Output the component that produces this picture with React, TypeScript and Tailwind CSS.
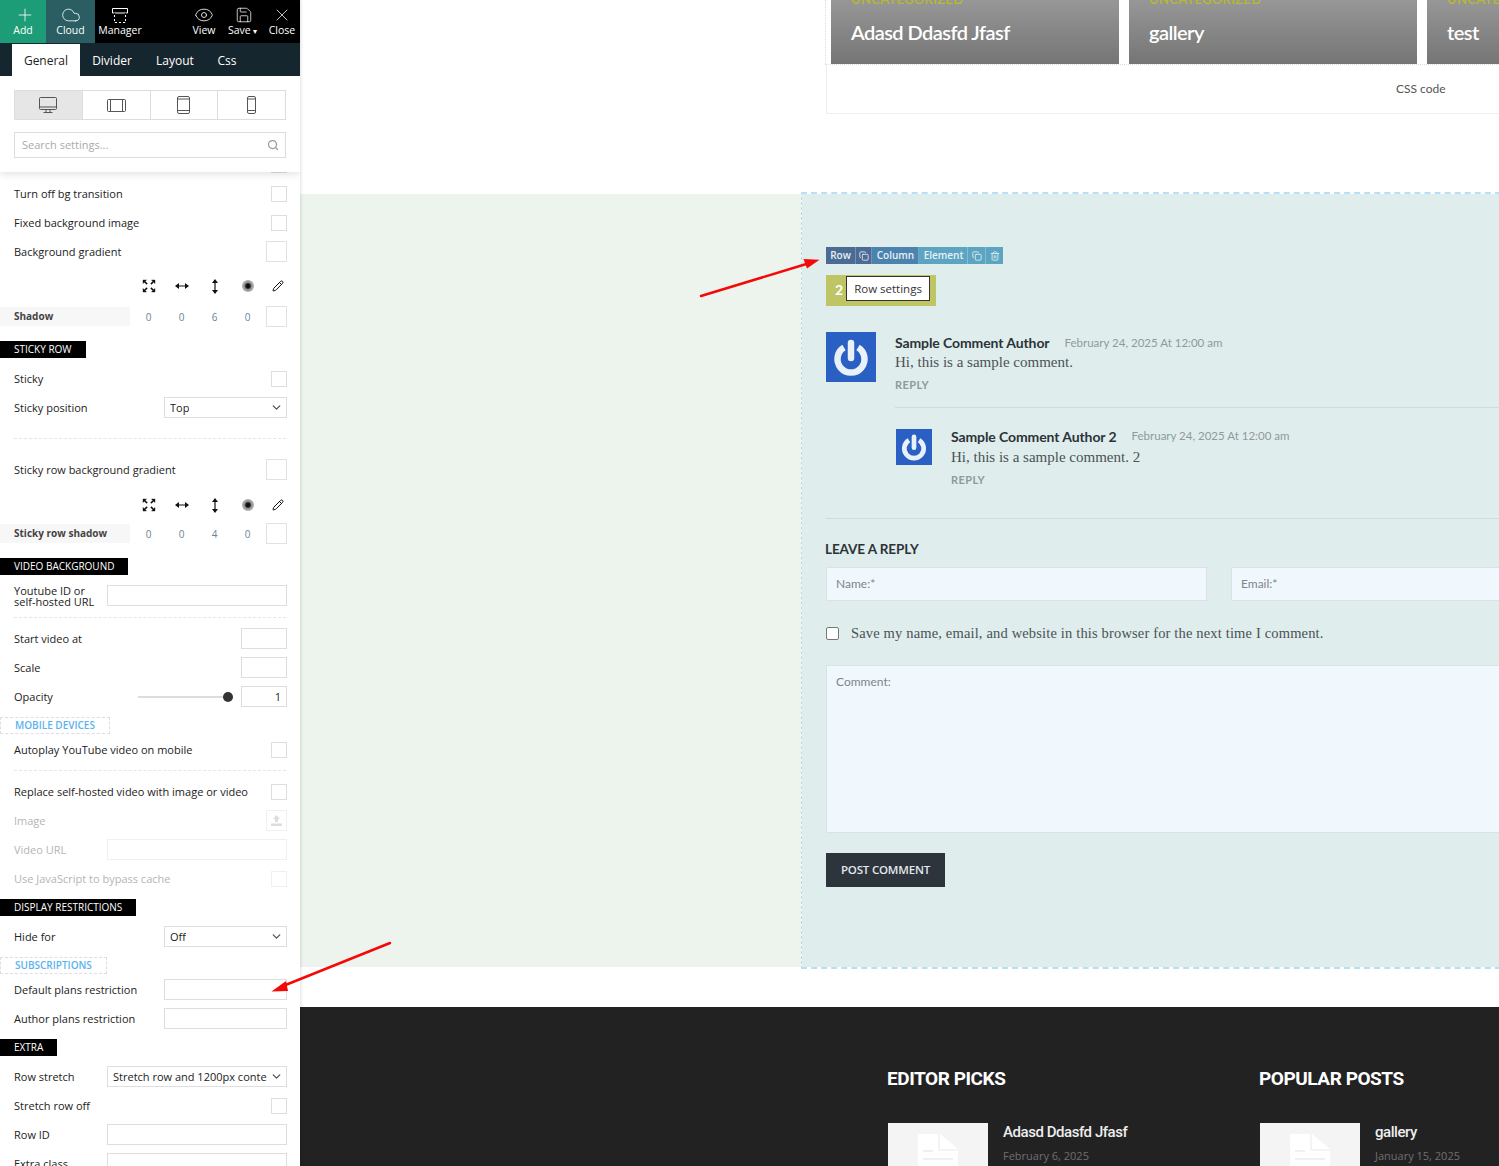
import React from "react";
import { ChevronDown, Cloud, Copy, Eye, Pencil, Plus, Save, Search, Trash2, X } from "lucide-react";

const sans = "font-['Open_Sans',sans-serif]";

function Row({ label, children, dim }: { label: React.ReactNode; children?: React.ReactNode; dim?: boolean }) {
  return (
    <div className="flex h-[29px] items-center justify-between pl-[14px] pr-[13px]">
      <span className={dim ? "text-[#b5b5b5]" : "text-[#222]"}>{label}</span>
      <div className="-mt-[2px] flex">{children}</div>
    </div>
  );
}

const Check = ({ dim }: { dim?: boolean }) => (
  <div className={`h-[16px] w-[16px] border ${dim ? "border-[#f0f0f0]" : "border-[#dedede]"}`} />
);
const Swatch = () => <div className="h-[21px] w-[21px] border border-[#e2e2e2]" />;
const Field = ({ w, dim, children }: { w: string; dim?: boolean; children?: React.ReactNode }) => (
  <div className={`flex h-[21px] items-center justify-end border pr-[5px] pt-[2px] ${w} ${dim ? "border-[#f0f0f0]" : "border-[#dedede]"}`}>{children}</div>
);
const Select = ({ w, value }: { w: string; value: string }) => (
  <div className={`flex h-[21px] items-center justify-between overflow-hidden border border-[#dedede] pl-[5px] pr-[3px] text-[#222] ${w}`}>
    <span className="overflow-hidden whitespace-nowrap pt-[2px]">{value}</span>
    <ChevronDown size={13} strokeWidth={2.5} className="ml-[2px] shrink-0 text-[#555]" />
  </div>
);
const Heading = ({ w, mt, children }: { w: string; mt: string; children: React.ReactNode }) => (
  <div className={`flex h-[17px] items-center bg-black pl-[14px] text-[10px] text-white ${w} ${mt}`}>{children}</div>
);
const SubHeading = ({ w, mt, children }: { w: string; mt: string; children: React.ReactNode }) => (
  <div className={`flex h-[17px] items-center border border-dashed border-[#dedede] pl-[14px] text-[10px] font-semibold text-[#5bb2ef] ${w} ${mt}`}>{children}</div>
);
const Dash = ({ mt }: { mt: string }) => <div className={`mx-[14px] h-px border-t border-dashed border-[#e6e6e6] ${mt}`} />;

function ExpandIcon() {
  return (
    <svg width="14" height="14" viewBox="0 0 14 14" fill="#111" stroke="#111" strokeWidth="0.4">
      <path d="M1 1h3.500L3.200 2.300 5.400 4.500 4.500 5.400 2.300 3.200 1 4.500z" />
      <path d="M13 1v3.500L11.700 3.200 9.500 5.400 8.600 4.500 10.800 2.300 9.500 1z" />
      <path d="M1 13V9.500L2.300 10.800 4.500 8.600 5.400 9.500 3.200 11.700 4.500 13z" />
      <path d="M13 13H9.500L10.800 11.700 8.600 9.500 9.500 8.600 11.700 10.800 13 9.500z" />
    </svg>
  );
}

function ShadowIcons() {
  const cell = "flex w-[33px] justify-center";
  return (
    <div className="flex h-[38px] items-center pl-[132px] text-[#111]">
      <div className={cell}><ExpandIcon /></div>
      <div className={cell}>
        <svg width="14" height="8" viewBox="0 0 14 8" fill="#111"><path d="M0 4l4-3v2.400h6V1l4 3-4 3V4.600H4V7z" /></svg>
      </div>
      <div className={cell}>
        <svg width="8" height="15" viewBox="0 0 8 15" fill="#111"><path d="M4 0l3 4H4.600v7H7l-3 4-3-4h2.400V4H1z" /></svg>
      </div>
      <div className={cell}>
        <div className="h-[12px] w-[12px] rounded-full bg-[radial-gradient(circle,#111_0%,#111_22%,#999_45%,#ccc_100%)]" />
      </div>
      <div className="ml-[4px] flex w-[20px] justify-center"><Pencil size={12} strokeWidth={2} /></div>
    </div>
  );
}

function ShadowRow({ label, v }: { label: string; v: string }) {
  return (
    <div className="flex h-[19px] items-center">
      <div className="flex h-full w-[130px] items-center bg-[#f7f7f7] pl-[14px] text-[10px] font-bold text-[#444]">{label}</div>
      <div className="ml-[2px] flex pt-[1px] text-[10px] text-[#6d8290]">
        {["0", "0", v, "0"].map((n, i) => <div key={i} className="w-[33px] text-center">{n}</div>)}
      </div>
      <div className="ml-[2px]"><Swatch /></div>
    </div>
  );
}

function Panel() {
  return (
    <aside className={`relative z-10 flex h-full w-[300px] shrink-0 flex-col overflow-hidden bg-white text-[11px] shadow-[1px_0_3px_rgba(0,0,0,0.12)] ${sans}`}>
      <div className="relative z-10 h-[172px] shrink-0 bg-white shadow-[0_2px_8px_rgba(0,0,0,0.12)]">
        <div className="flex h-[43px] bg-black text-[10.5px] text-white">
          <div className="flex w-[46px] flex-col items-center bg-[#1c9d77] pl-[2px] pt-[5px]"><Plus size={20} strokeWidth={1} className="ml-[2px]" /><span className="-mt-[2px] pr-[2px] leading-[14px]">Add</span></div>
          <div className="flex w-[49px] flex-col items-center bg-[#2a5e62] pt-[5px]"><Cloud size={20} strokeWidth={1} /><span className="-mt-[2px] leading-[14px]">Cloud</span></div>
          <div className="flex w-[50px] flex-col items-center pt-[8px]">
            <svg width="16" height="15" viewBox="0 0 16 15" fill="none" stroke="white" strokeWidth="1">
              <path d="M.5 5V.5h15V5zM2.500 5v9.500h11V5" />
              <path d="M2.500 5v9.500h11V5" stroke="black" strokeDasharray="2 2" />
            </svg>
            <span className="leading-[14px]">Manager</span>
          </div>
          <div className="ml-auto flex">
            <div className="mr-[12px] flex w-[24px] flex-col items-center pt-[5px]"><Eye size={20} strokeWidth={1} /><span className="-mt-[2px] leading-[14px]">View</span></div>
            <div className="mr-[6px] flex w-[30px] flex-col items-start pt-[6px]"><Save size={18} strokeWidth={1} className="ml-[7px]" /><span className="-mt-[1px] whitespace-nowrap leading-[14px]">Save <span className="text-[8px]">▾</span></span></div>
            <div className="flex w-[36px] flex-col items-center pt-[5px]"><X size={20} strokeWidth={0.9} /><span className="-mt-[2px] leading-[14px]">Close</span></div>
          </div>
        </div>
        <div className="flex h-[33px] items-end bg-[#16262e] pl-[12px] text-[12px] text-white">
          <div className="flex h-[32px] w-[68px] items-center justify-center bg-white pt-[2px] text-[#222]">General</div>
          <div className="flex h-[32px] w-[64px] items-center justify-center pt-[2px]">Divider</div>
          <div className="flex h-[32px] w-[62px] items-center justify-center pt-[2px]">Layout</div>
          <div className="flex h-[32px] w-[42px] items-center justify-center pt-[2px]">Css</div>
        </div>
        <div className="mx-[14px] mt-[14px] flex h-[30px] w-[272px] border border-[#dddddd] text-[#555]">
          <div className="flex flex-1 items-center justify-center bg-[#e6e6e6]">
            <svg width="18" height="18" viewBox="0 0 18 18" fill="none" stroke="#555" strokeWidth="1"><rect x=".5" y="1.500" width="17" height="12" rx="1" /><path d="M.5 11h17M7 13.500V16M11 13.500V16M4.500 16.500h9" /></svg>
          </div>
          <div className="flex flex-1 items-center justify-center border-l border-[#dddddd]">
            <svg width="19" height="13" viewBox="0 0 19 13" fill="none" stroke="#555" strokeWidth="1"><rect x=".5" y=".5" width="18" height="12" rx="1" /><path d="M3.500.5v12M15.500.5v12" /></svg>
          </div>
          <div className="flex flex-1 items-center justify-center border-l border-[#dddddd]">
            <svg width="13" height="18" viewBox="0 0 13 18" fill="none" stroke="#555" strokeWidth="1"><rect x=".5" y=".5" width="12" height="17" rx="1.500" /><path d="M.5 3h12M.5 14.500h12" /></svg>
          </div>
          <div className="flex flex-1 items-center justify-center border-l border-[#dddddd]">
            <svg width="9" height="18" viewBox="0 0 9 18" fill="none" stroke="#555" strokeWidth="1"><rect x=".5" y=".5" width="8" height="17" rx="1.500" /><path d="M.5 3h8M.5 14.500h8" /></svg>
          </div>
        </div>
        <div className="mx-[14px] mt-[12px] flex h-[26px] w-[272px] items-center justify-between border border-[#dddddd] pl-[7px] pr-[6px] text-[#aaa]">
          <span>Search settings...</span>
          <Search size={12} strokeWidth={2.5} className="text-[#999]" />
        </div>
      </div>

      <div className="flex-1">
        <div className="ml-[271px] h-px w-[16px] bg-[#dedede]" />
        <div className="mt-[7px]" />
        <Row label="Turn off bg transition"><Check /></Row>
        <Row label="Fixed background image"><Check /></Row>
        <Row label="Background gradient"><Swatch /></Row>
        <ShadowIcons />
        <div className="mt-[2px]"><ShadowRow label="Shadow" v="6" /></div>
        <Heading w="w-[86px]" mt="mt-[15px]">STICKY ROW</Heading>
        <div className="mt-[7px]" />
        <Row label="Sticky"><Check /></Row>
        <Row label="Sticky position"><Select w="w-[123px]" value="Top" /></Row>
        <Dash mt="mt-[15px]" />
        <div className="mt-[17px]" />
        <Row label="Sticky row background gradient"><Swatch /></Row>
        <div className="mt-[1px]"><ShadowIcons /></div>
        <ShadowRow label="Sticky row shadow" v="4" />
        <Heading w="w-[128px]" mt="mt-[15px]">VIDEO BACKGROUND</Heading>
        <div className="mt-[10px] flex h-[21px] items-center justify-between pl-[14px] pr-[13px]">
          <span className="text-[11px] leading-[11px] text-[#222]">Youtube ID or<br />self-hosted URL</span>
          <Field w="w-[180px]" />
        </div>
        <Dash mt="mt-[11px]" />
        <div className="mt-[7px]" />
        <Row label="Start video at"><Field w="w-[46px]" /></Row>
        <Row label="Scale"><Field w="w-[46px]" /></Row>
        <Row label="Opacity">
          <div className="flex items-center">
            <div className="relative mr-[8px] h-[2px] w-[95px] bg-[#dddddd]">
              <div className="absolute -top-[4px] right-0 h-[10px] w-[10px] rounded-full bg-[#333]" />
            </div>
            <Field w="w-[46px]"><span className="text-[#222]">1</span></Field>
          </div>
        </Row>
        <SubHeading w="w-[110px]" mt="mt-[5px]">MOBILE DEVICES</SubHeading>
        <div className="mt-[2px]" />
        <Row label="Autoplay YouTube video on mobile"><Check /></Row>
        <Dash mt="mt-[5px]" />
        <div className="mt-[7px]" />
        <Row label="Replace self-hosted video with image or video"><Check /></Row>
        <Row label="Image" dim>
          <div className="flex h-[21px] w-[21px] items-center justify-center border border-[#f0f0f0]">
            <svg width="11" height="11" viewBox="0 0 11 11" fill="#dddddd"><path d="M5.500 0L9 4H7v3H4V4H2zM0 8.500h11V11H0z" /></svg>
          </div>
        </Row>
        <Row label="Video URL" dim><Field w="w-[180px]" dim /></Row>
        <Row label="Use JavaScript to bypass cache" dim><Check dim /></Row>
        <Heading w="w-[136px]" mt="mt-[5px]">DISPLAY RESTRICTIONS</Heading>
        <div className="mt-[7px]" />
        <Row label="Hide for"><Select w="w-[123px]" value="Off" /></Row>
        <SubHeading w="w-[107px]" mt="mt-[5px]">SUBSCRIPTIONS</SubHeading>
        <div className="mt-[2px]" />
        <Row label="Default plans restriction"><Field w="w-[123px]" /></Row>
        <Row label="Author plans restriction"><Field w="w-[123px]" /></Row>
        <Heading w="w-[57px]" mt="mt-[5px]">EXTRA</Heading>
        <div className="mt-[7px]" />
        <Row label="Row stretch"><Select w="w-[180px]" value="Stretch row and 1200px conte" /></Row>
        <Row label="Stretch row off"><Check /></Row>
        <Row label="Row ID"><Field w="w-[180px]" /></Row>
        <Row label="Extra class"><Field w="w-[180px]" /></Row>
      </div>
    </aside>
  );
}

function PostCard({ title, w }: { title: string; w: string }) {
  return (
    <div className={`flex h-[64px] shrink-0 flex-col justify-end overflow-hidden bg-gradient-to-b from-[#979797] to-[#757575] pb-[20px] pl-[20px] ${w}`}>
      <div className="text-[13px] font-semibold leading-[16px] tracking-[0.3px] text-[#b6ba2e]">UNCATEGORIZED</div>
      <div className="mt-[13px] text-[20px] font-semibold leading-[24px] tracking-[-0.55px] text-white">{title}</div>
    </div>
  );
}

function PowerAvatar({ size }: { size: string }) {
  return (
    <div className={`shrink-0 bg-[#2a5fc4] ${size}`}>
      <svg viewBox="0 0 50 50" className="h-full w-full" fill="none" stroke="#e8f1f8" strokeWidth="6.500">
        <path d="M18 15.500a13.500 13.500 0 1 0 14 0" />
        <path d="M25 11v15" strokeLinecap="round" />
      </svg>
    </div>
  );
}

function Comment({ author, date, text, avatar, small }: { author: string; date: string; text: string; avatar: string; small?: boolean }) {
  return (
    <div className="flex gap-[19px]">
      <PowerAvatar size={avatar} />
      <div>
        <div className={`flex items-center text-[14px] font-bold tracking-[-0.1px] text-[#2c3338] ${small ? "h-[14px]" : "h-[21px]"}`}>
          <span>{author}</span>
          <span className="ml-[15px] text-[11.5px] font-normal tracking-normal text-[#8f9a9c]">{date}</span>
        </div>
        <div className={`flex items-center font-['Liberation_Serif',serif] text-[15px] text-[#4a5256] ${small ? "mt-[6px] h-[16px]" : "h-[19px]"}`}>{text}</div>
        <div className={`flex h-[16px] items-center text-[11px] font-bold tracking-[0.4px] text-[#8f9a9c] ${small ? "mt-[7px]" : "mt-[5px]"}`}>REPLY</div>
      </div>
    </div>
  );
}

function Thumb() {
  return (
    <div className="h-[60px] w-[100px] shrink-0 overflow-hidden bg-[#f4f4f4] pl-[30px] pt-[11px]">
      <svg width="40" height="50" viewBox="0 0 40 50">
        <path d="M0 0h20v17h20v33H0zM22 0l18 15H22z" fill="white" />
        <path d="M5 17h10M5 25h30" stroke="#f0f0f0" strokeWidth="2" />
      </svg>
    </div>
  );
}

function FooterCol({ heading, title, date }: { heading: string; title: string; date: string }) {
  return (
    <div className="w-[372px] shrink-0">
      <div className="flex h-[22px] items-center font-['Roboto',sans-serif] text-[19px] font-bold tracking-[-0.45px] text-white">{heading}</div>
      <div className="ml-[1px] mt-[33px] flex gap-[15px]">
        <Thumb />
        <div>
          <div className="font-['Roboto',sans-serif] text-[15px] font-medium leading-[18px] tracking-[-0.45px] text-[#eeeeee]">{title}</div>
          <div className={`mt-[8px] text-[11px] leading-[14px] text-[#6f6f6f] ${sans}`}>{date}</div>
        </div>
      </div>
    </div>
  );
}

function ToolBtn({ children, cls }: { children: React.ReactNode; cls: string }) {
  return <div className={`flex h-full items-center justify-center border-r border-[#ffffff40] ${cls}`}>{children}</div>;
}

function Main() {
  return (
    <main className="flex h-full min-w-0 flex-1 flex-col overflow-hidden font-['Lato',sans-serif]">
      <div className="h-[192px] shrink-0 bg-white pl-[525px]">
        <div className="w-[800px]">
          <div className="flex h-[64px] gap-[10px] border-l border-dotted border-[#dddddd] pl-[5px]">
            <PostCard title="Adasd Ddasfd Jfasf" w="w-[288px]" />
            <PostCard title="gallery" w="w-[288px]" />
            <PostCard title="test" w="w-[288px]" />
          </div>
          <div className="h-px border-t border-dotted border-[#dddddd]" />
          <div className="ml-px h-[49px] border border-t-0 border-[#eeeeee] pl-[569px] pt-[16px] text-[12px] leading-[16px] text-[#555]">CSS code</div>
        </div>
      </div>

      <div className="flex h-[777px] shrink-0">
        <div className="my-[2px] w-[501px] shrink-0 bg-[#edf3ed]" />
        <div className="w-[720px] shrink-0 border-y-2 border-l border-dashed border-y-[#b8e0f5] border-l-[#b5dcea] bg-[#e0eded] bg-clip-padding pl-[24px] pt-[53px]">
          <div className={`flex h-[17px] w-[177px] text-[10px] font-semibold text-[#e8f0f5] ${sans}`}>
            <ToolBtn cls="w-[30px] bg-[#4b6a94]">Row</ToolBtn>
            <ToolBtn cls="w-[16px] bg-[#4b6a94]"><Copy size={10} strokeWidth={2} /></ToolBtn>
            <ToolBtn cls="w-[47px] bg-[#4a84ae] pl-[1px]">Column</ToolBtn>
            <ToolBtn cls="w-[49px] bg-[#5ba5c2] pl-[1px]">Element</ToolBtn>
            <ToolBtn cls="w-[18px] bg-[#5ba5c2]"><Copy size={10} strokeWidth={2} /></ToolBtn>
            <ToolBtn cls="w-[17px] bg-[#5ba5c2] border-r-0"><Trash2 size={10} strokeWidth={2} /></ToolBtn>
          </div>
          <div className="relative mt-[11px] h-[31px] w-[110px] bg-[#bfc464] pl-[9px] text-[14px] font-bold leading-[29px] text-white">
            2
            <div className={`absolute left-[20px] top-[1px] flex h-[25px] w-[84px] items-center justify-center border border-[#333] bg-white text-[11.500px] font-normal text-[#333] ${sans}`}>Row settings</div>
          </div>

          <div className="mt-[26px]">
            <Comment author="Sample Comment Author" date="February 24, 2025 At 12:00 am" text="Hi, this is a sample comment." avatar="h-[50px] w-[50px]" />
          </div>
          <div className="ml-[69px] mt-[14px] h-px bg-[#cfdcdc]" />
          <div className="ml-[70px] mt-[21px]">
            <Comment author="Sample Comment Author 2" date="February 24, 2025 At 12:00 am" text="Hi, this is a sample comment. 2" avatar="h-[36px] w-[36px]" small />
          </div>
          <div className="mt-[30px] h-px bg-[#cfdcdc]" />
          <div className="-ml-px mt-[21px] flex h-[18px] items-center text-[13.500px] font-bold tracking-[-0.1px] text-[#2c3338]">LEAVE A REPLY</div>
          <div className="mt-[9px] flex gap-[24px] text-[12px] text-[#7b868a]">
            <div className="flex h-[34px] w-[381px] shrink-0 items-center border border-[#d7e3e6] bg-[#f1f8fd] pl-[9px]">Name:*</div>
            <div className="flex h-[34px] flex-1 items-center border border-[#d7e3e6] bg-[#f1f8fd] pl-[9px]">Email:*</div>
          </div>
          <div className="mt-[20px] flex h-[25px] items-center font-['Liberation_Serif',serif] text-[14.500px] tracking-[0.16px] text-[#4a5256]">
            <div className="mr-[12px] h-[13px] w-[13px] shrink-0 rounded-[2px] border border-[#777] bg-white" />
            Save my name, email, and website in this browser for the next time I comment.
          </div>
          <div className="mt-[19px] h-[168px] border border-[#d7e3e6] bg-[#f1f8fd] pl-[9px] pt-[7px] text-[12px] text-[#7b868a]">Comment:</div>
          <div className={`mt-[20px] flex h-[34px] w-[119px] items-center justify-center bg-[#2d343c] text-[11.500px] font-semibold tracking-[-0.2px] text-[#e4e8ec] ${sans}`}>POST COMMENT</div>
        </div>
      </div>

      <div className="h-[38px] shrink-0 bg-white" />
      <div className="flex flex-1 bg-[#222222] pl-[587px] pt-[61px]">
        <FooterCol heading="EDITOR PICKS" title="Adasd Ddasfd Jfasf" date="February 6, 2025" />
        <FooterCol heading="POPULAR POSTS" title="gallery" date="January 15, 2025" />
      </div>
    </main>
  );
}

export default function App() {
  return (
    <div className="relative flex h-[1166px] w-full overflow-hidden bg-white">
      <Panel />
      <Main />
      <svg className="pointer-events-none absolute left-0 top-0 z-20 h-[1166px] w-[1499px]" viewBox="0 0 1499 1166" fill="#f50808" stroke="none">
        <path d="M701 296L808 263.500" stroke="#f50808" strokeWidth="2.500" strokeLinecap="round" />
        <path d="M819.500 259.700L803.500 259L807 268.500Z" />
        <path d="M390 943L283 986" stroke="#f50808" strokeWidth="2.500" strokeLinecap="round" />
        <path d="M271.500 991.500L286 981L288 991Z" />
      </svg>
    </div>
  );
}
